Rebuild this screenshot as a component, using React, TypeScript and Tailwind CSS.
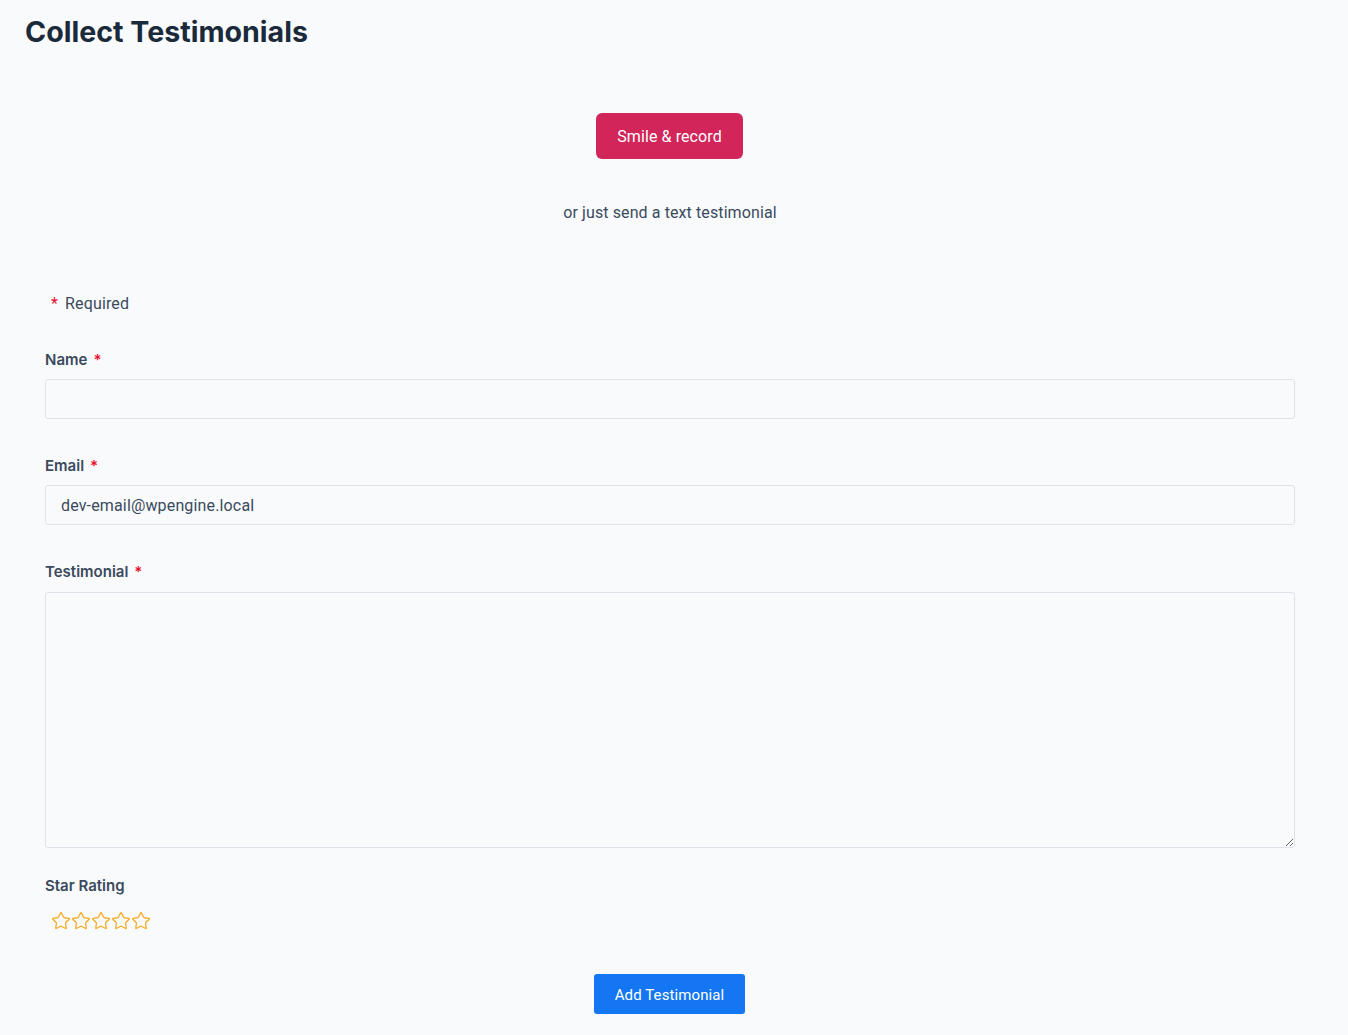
import { Star } from "lucide-react";

function Label({ text, required }: { text: string; required?: boolean }) {
  return (
    <label className="flex items-center h-5 pt-[2px] text-[15px] font-semibold text-[#3a4a5c] font-['Inter',sans-serif]">
      {text}
      {required && <span className="ml-[6px] text-[#e8112d]">*</span>}
    </label>
  );
}

export default function App() {
  return (
    <main className="min-h-screen bg-[#f9fafc] font-['Roboto',sans-serif] text-[#3a4a5c] pb-[21px]">
      {/* HEADER */}
      <h1 className="pl-[25px] pt-[15px] text-[28.6px] leading-[33px] font-bold text-[#1b2a3a] font-['Inter',sans-serif]">
        Collect Testimonials
      </h1>

      <div className="ml-[45px] w-[1250px]">
        {/* RECORD */}
        <div className="flex flex-col items-center">
          <button className="mt-[65px] h-[46px] w-[147px] -ml-px pt-[2px] rounded-[6px] bg-[#d2255a] text-white text-[16px] tracking-[0.1px]">
            Smile &amp; record
          </button>
          <p className="mt-[42px] text-[16px] leading-6 tracking-[0.1px]">
            or just send a text testimonial
          </p>
        </div>

        {/* REQUIRED */}
        <p className="mt-[66px] pl-[6px] pt-[2px] h-6 text-[16px] leading-[22px] tracking-[0.15px]">
          <span className="text-[#e8112d] mr-[7px]">*</span>Required
        </p>

        {/* FIELDS */}
        <div className="mt-[34px]">
          <Label text="Name" required />
          <input
            type="text"
            className="mt-[10px] block w-full h-10 rounded-[3px] border border-[#dde3ea] bg-[#f9fafc] px-[15px] text-[16px] outline-none"
          />
        </div>

        <div className="mt-[36px]">
          <Label text="Email" required />
          <input
            type="text"
            defaultValue="dev-email@wpengine.local"
            className="mt-[10px] block w-full h-10 rounded-[3px] border border-[#dde3ea] bg-[#f9fafc] px-[15px] text-[16px] tracking-[0.15px] text-[#3a4a5c] outline-none"
          />
        </div>

        <div className="mt-[36px]">
          <Label text="Testimonial" required />
          <textarea className="mt-[11px] block w-full h-[256px] rounded-[3px] border border-[#dde3ea] bg-[#f9fafc] px-[15px] py-2 text-[16px] outline-none" />
        </div>

        {/* STARS */}
        <div className="mt-[27px]">
          <Label text="Star Rating" />
          <div className="mt-[16px] pl-[6px] flex">
            {[0, 1, 2, 3, 4].map((i) => (
              <Star key={i} size={20} strokeWidth={1.6} className="text-[#f7ac2b]" />
            ))}
          </div>
        </div>

        {/* SUBMIT */}
        <div className="mt-[43px] flex justify-center">
          <button className="h-10 w-[151px] -ml-px pt-[2px] rounded-[3px] bg-[#1476f2] text-white text-[15px] tracking-[0.1px]">
            Add Testimonial
          </button>
        </div>
      </div>
    </main>
  );
}
